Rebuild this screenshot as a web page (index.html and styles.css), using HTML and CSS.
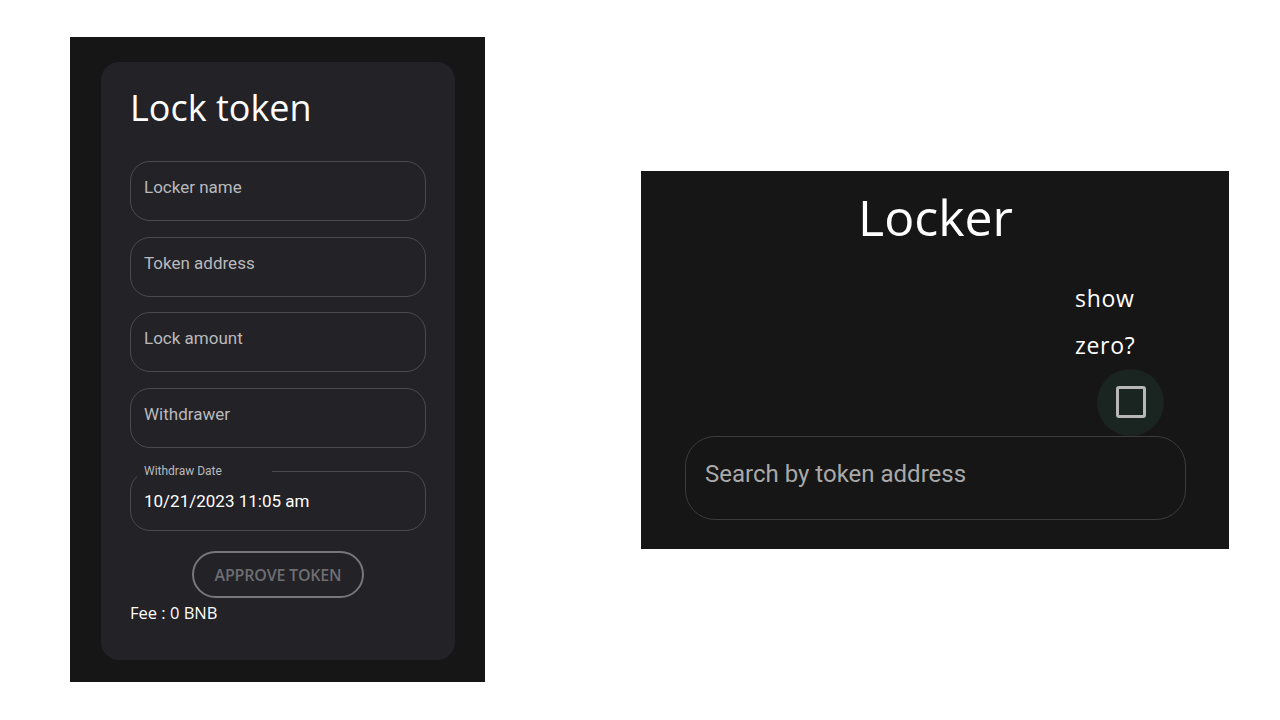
FILE: index.html
```html
<!DOCTYPE html>
<html lang="en">
<head>
<meta charset="utf-8">
<title>Locker</title>
<link rel="stylesheet" href="styles.css">
</head>
<body>
<div class="page">
  <section class="lock-panel">
    <div class="card">
      <h1 class="card-title">Lock token</h1>
      <div class="field"><span class="placeholder">Locker name</span></div>
      <div class="field"><span class="placeholder">Token address</span></div>
      <div class="field"><span class="placeholder">Lock amount</span></div>
      <div class="field"><span class="placeholder">Withdrawer</span></div>
      <div class="field field-date">
        <span class="float-label">Withdraw Date</span>
        <span class="value">10/21/2023 11:05 am</span>
      </div>
      <div class="actions"><button class="approve">APPROVE TOKEN</button></div>
      <p class="fee">Fee : 0 BNB</p>
    </div>
  </section>
  <section class="locker-panel">
    <h2 class="locker-title">Locker</h2>
    <div class="filter-row">
      <div class="filter">
        <span class="filter-label">show zero?</span>
        <span class="check-ripple"><span class="check-box"></span></span>
      </div>
    </div>
    <div class="search"><span class="search-placeholder">Search by token address</span></div>
  </section>
</div>
</body>
</html>
```

FILE: styles.css
```css
* { box-sizing: border-box; }
html, body { margin: 0; padding: 0; background: #ffffff; }
body { font-family: "Open Sans", "Noto Sans", sans-serif; }

.page {
  display: flex;
  align-items: center;
  gap: 156px;
  padding: 37px 0 0 70px;
}

.lock-panel {
  width: 415px;
  height: 645px;
  background: #161616;
  padding: 25px 30px 22px 31px;
}

.card {
  height: 598px;
  background: #232227;
  border-radius: 18px;
  padding: 0 29px;
  display: flex;
  flex-direction: column;
}

.card-title {
  margin: 25px 0 32px 0;
  font-family: "Open Sans", sans-serif;
  font-weight: 400;
  font-size: 36px;
  line-height: 42px;
  color: #ffffff;
  letter-spacing: 0;
}

.field {
  position: relative;
  height: 60px;
  flex-shrink: 0;
  border: 1px solid #4c4b51;
  border-radius: 20px;
  padding: 14px 0 0 13px;
  margin-bottom: 15.5px;
}

.placeholder {
  font-family: Roboto, sans-serif;
  font-size: 17px;
  line-height: 20px;
  color: #b9b9bc;
}

.field-date {
  margin-top: 8px;
  padding-top: 18px;
  margin-bottom: 0;
}

.float-label {
  position: absolute;
  left: 6px;
  top: -8px;
  width: 135px;
  padding-left: 7px;
  background: #232227;
  font-family: Roboto, sans-serif;
  font-size: 12px;
  line-height: 14px;
  color: #b9b9bc;
}

.value {
  font-family: Roboto, sans-serif;
  font-size: 17px;
  line-height: 20px;
  color: #ffffff;
}

.actions {
  display: flex;
  justify-content: center;
  margin-top: 20px;
}

.approve {
  width: 172px;
  height: 47px;
  border: 2px solid #77777b;
  border-radius: 24px;
  background: transparent;
  color: #6e6e72;
  font-family: "Open Sans", sans-serif;
  font-weight: 600;
  font-size: 16px;
  letter-spacing: -0.2px;
  padding: 0;
}

.fee {
  margin: 5px 0 0 0;
  font-family: "Open Sans", sans-serif;
  font-size: 16.5px;
  line-height: 20px;
  color: #ffffff;
}

.locker-panel {
  width: 588px;
  height: 378px;
  background: #161616;
  padding: 0 43px 0 44px;
  display: flex;
  flex-direction: column;
}

.locker-title {
  margin: 15px 0 0 0;
  text-align: center;
  font-family: "Open Sans", sans-serif;
  font-weight: 400;
  font-size: 50px;
  line-height: 62px;
  color: #ffffff;
}

.filter-row {
  display: flex;
  justify-content: flex-end;
  margin-top: 27px;
}

.filter {
  width: 111px;
  display: flex;
  flex-direction: column;
  align-items: center;
}

.filter-label {
  align-self: flex-start;
  width: 80px;
  font-family: "Open Sans", sans-serif;
  font-size: 23px;
  letter-spacing: 0.7px;
  line-height: 47px;
  color: #ffffff;
}

.check-ripple {
  width: 67px;
  height: 67px;
  border-radius: 50%;
  background: #1a2421;
  display: flex;
  align-items: center;
  justify-content: center;
}

.check-box {
  width: 30px;
  height: 32px;
  border: 3px solid #b5b8b6;
  border-radius: 3px;
}

.search {
  height: 84px;
  border: 1px solid #3c3c3c;
  border-radius: 30px;
  padding: 23px 0 0 19px;
}

.search-placeholder {
  font-family: Roboto, sans-serif;
  font-size: 24px;
  line-height: 28px;
  color: #a9a9a9;
}
```
